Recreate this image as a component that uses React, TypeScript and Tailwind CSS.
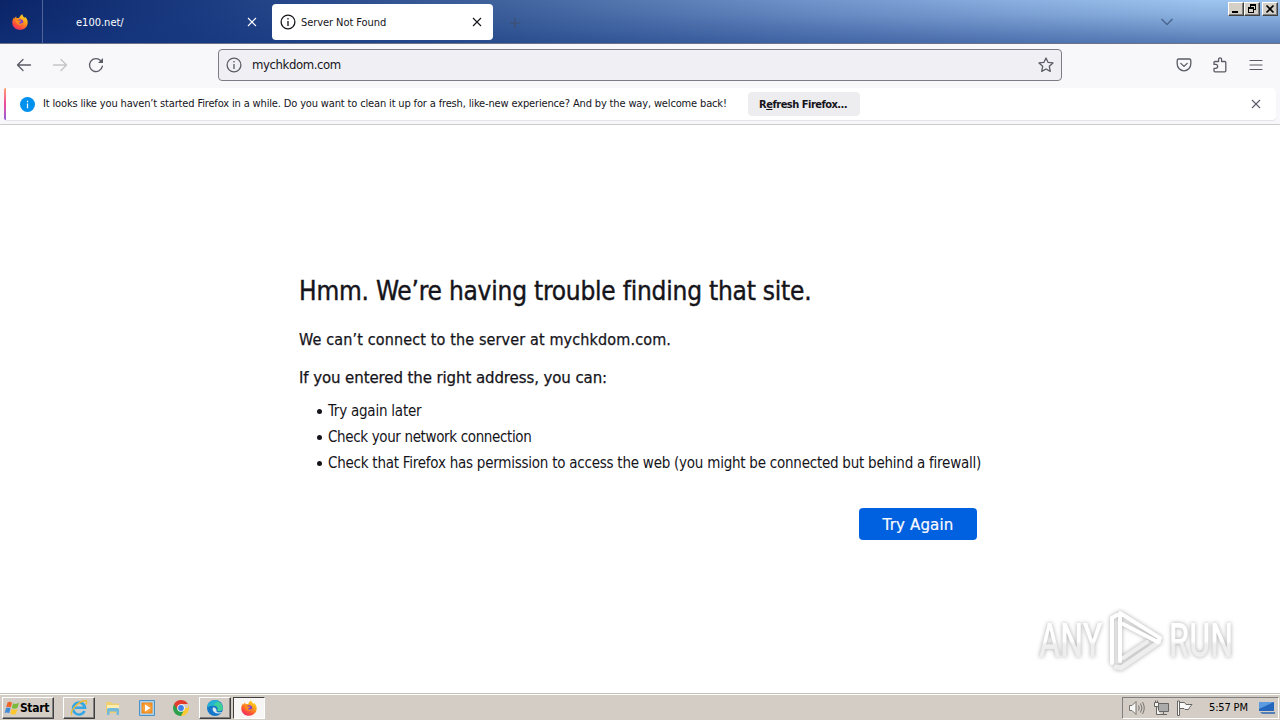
import type { ReactNode } from 'react';
import { clsx } from 'clsx';

interface IconProps {
  className?: string;
}

const SUGGESTIONS = [
  { text: 'Try again later', className: 'tracking-[-0.22px]' },
  { text: 'Check your network connection', className: 'tracking-[-0.36px]' },
  {
    text: 'Check that Firefox has permission to access the web (you might be connected but behind a firewall)',
    className: 'tracking-[-0.24px]',
  },
];

function FirefoxIcon({ className }: IconProps) {
  return (
    <svg viewBox="0 0 16 16" className={className} aria-hidden="true">
      <defs>
        <linearGradient id="fx-body" x1="0.8" y1="0" x2="0.2" y2="1">
          <stop offset="0" stopColor="#ffe226" />
          <stop offset="0.4" stopColor="#ff9a16" />
          <stop offset="0.75" stopColor="#ff4a3d" />
          <stop offset="1" stopColor="#e82a70" />
        </linearGradient>
      </defs>
      <path
        d="M10.3 0.2c.2 1.700 1.200 2.300 2.300 3.600.4-.2.500-.6.400-1 1.700 1.500 2.700 3.400 2.700 5.600 0 4.200-3.400 7.400-7.700 7.400S.3 12.500.3 8.400c0-2 .7-3.700 1.700-5 .1.500.2.900.4 1.200.5-.9 1.100-1.500 1.900-2-.1.700 0 1.200.3 1.600 1-.2 1.800-.1 2.500.1C7.500 2.400 8.700 1 10.300.2z"
        fill="url(#fx-body)"
      />
      <circle cx="8.200" cy="8.300" r="3" fill="#7c3fd4" />
      <path d="M4.200 6.200c1.200-.5 2.200-.2 3.200.4l1.800.1c-.3 1.200-1.500 1.300-1.900 1.700-.3.800.5 1.400 1.500 1.200 1.300-.2 1.700-.9 2.700-.7-.9 1.700-2.700 2.600-4.500 2.100C4.800 10.400 3.700 8.300 4.200 6.200z" fill="#ff8a1c" />
    </svg>
  );
}

function InfoIcon({ className }: IconProps) {
  return (
    <svg viewBox="0 0 16 16" className={className} fill="none" stroke="currentColor" aria-hidden="true">
      <circle cx="8" cy="8" r="6.900" strokeWidth="1.300" />
      <path d="M8 7v5M8 4v1.500" strokeWidth="1.300" />
    </svg>
  );
}

function CloseIcon({ className }: IconProps) {
  return (
    <svg viewBox="0 0 10 10" className={className} fill="none" stroke="currentColor" strokeWidth="1.100" aria-hidden="true">
      <path d="M1 1l8 8M9 1l-8 8" />
    </svg>
  );
}

function BackIcon({ className }: IconProps) {
  return (
    <svg viewBox="0 0 16 16" className={className} fill="none" stroke="currentColor" strokeWidth="1.300" strokeLinecap="round" strokeLinejoin="round" aria-hidden="true">
      <path d="M14.500 8H1.500M7 2.500L1.500 8 7 13.500" />
    </svg>
  );
}

function ReloadIcon({ className }: IconProps) {
  return (
    <svg viewBox="0 0 16 16" className={className} fill="none" stroke="currentColor" strokeWidth="1.300" strokeLinecap="round" aria-hidden="true">
      <path d="M14.400 9.200A6.500 6.500 0 1 1 12.800 3.700" />
      <path d="M15 1v5h-5z" fill="currentColor" stroke="none" />
    </svg>
  );
}

function StarIcon({ className }: IconProps) {
  return (
    <svg viewBox="0 0 16 16" className={className} fill="none" stroke="currentColor" strokeWidth="1.300" strokeLinejoin="round" aria-hidden="true">
      <path d="M8 1l2 4.300 5 .6-3.700 3.400 1 5.100L8 12l-4.300 2.400 1-5.100L1 5.900l5-.6z" />
    </svg>
  );
}

function PocketIcon({ className }: IconProps) {
  return (
    <svg viewBox="0 0 16 16" className={className} fill="none" stroke="currentColor" strokeWidth="1.300" strokeLinecap="round" strokeLinejoin="round" aria-hidden="true">
      <path d="M2.700 2h10.600a1.500 1.500 0 0 1 1.500 1.500V7a6.800 6.800 0 0 1-13.600 0V3.500A1.500 1.500 0 0 1 2.700 2z" />
      <path d="M4.800 6.400L8 9.400l3.200-3" />
    </svg>
  );
}

function PuzzleIcon({ className }: IconProps) {
  return (
    <svg viewBox="0 0 16 16" className={className} fill="none" stroke="currentColor" strokeWidth="1.300" strokeLinejoin="round" aria-hidden="true">
      <path d="M2 7.400V5.500a1 1 0 0 1 1-1h3.600V2.300a1.500 1.500 0 0 1 3 0v2.200h3.200a1 1 0 0 1 1 1v8.300a1 1 0 0 1-1 1H3a1 1 0 0 1-1-1v-2.500h1.700a1.900 1.900 0 0 0 0-3.900z" />
    </svg>
  );
}

function MenuIcon({ className }: IconProps) {
  return (
    <svg viewBox="0 0 14 12" className={className} stroke="currentColor" strokeWidth="1.200" strokeLinecap="round" aria-hidden="true">
      <path d="M1 1.500h12M1 6h12M1 10.500h12" />
    </svg>
  );
}

function WindowButton({ label, className, children }: { label: string; className?: string; children: ReactNode }) {
  return (
    <button
      aria-label={label}
      className={clsx(
        'h-[14px] w-4 border border-t-white border-l-white border-r-[#404040] border-b-[#404040] bg-[#d4d0c8] shadow-[inset_-1px_-1px_0_#808080]',
        className
      )}
    >
      <svg viewBox="0 0 14 12" className="h-3 w-3.5" fill="none" stroke="#000" shapeRendering="crispEdges">
        {children}
      </svg>
    </button>
  );
}

function TabStrip() {
  return (
    <header className="flex h-[44px] shrink-0 border-b border-[#6c7387] bg-[linear-gradient(to_bottom,rgba(20,55,128,0)_0%,rgba(20,55,128,0.14)_35%,rgba(20,55,128,0.52)_100%),linear-gradient(to_right,#0b2468_0%,#1a3a80_15%,#42659f_40%,#7093ca_63%,#8bb0e0_80%,#9dc5ef_94%,#9dc5ef_100%)]">
      <div className="flex w-[43px] shrink-0 items-center border-r border-[#506497] pl-3">
        <FirefoxIcon className="h-4 w-4" />
      </div>
      <div className="flex w-[229px] shrink-0 items-center pt-px pr-[15px] pl-[33px] text-white">
        <span className="flex-1 pt-0.5 text-[11px]">e100.net/</span>
        <CloseIcon className="h-2.5 w-2.5" />
      </div>
      <div className="mt-1 flex h-9 w-[221px] shrink-0 items-center rounded bg-white pr-[11px] pl-2 text-[#15141a]">
        <InfoIcon className="mr-[5px] h-4 w-4" />
        <span className="flex-1 pt-0.5 text-[11px] tracking-[-0.07px]">Server Not Found</span>
        <CloseIcon className="h-2.5 w-2.5" />
      </div>
      <svg viewBox="0 0 10 10" className="mt-[18px] ml-[17px] h-2.5 w-2.5" stroke="#3f4f70" strokeWidth="1.200">
        <path d="M5 0v10M0 5h10" />
      </svg>
      <svg viewBox="0 0 12 8" className="mt-[18px] ml-auto h-2 w-3" fill="none" stroke="#4c6690" strokeWidth="1.500">
        <path d="M.5 1L6 6.500 11.500 1" />
      </svg>
      <div className="mt-0.5 mr-[2px] ml-[55px] flex">
        <WindowButton label="Minimize">
          <path d="M3 9h6" strokeWidth="2" />
        </WindowButton>
        <WindowButton label="Restore">
          <path d="M5 2h6M5.500 1v4M10.500 1v6M8 6.500h3M3 5h6M3.500 4v6M8.500 4v6M3 9.500h6" />
          <path d="M5 1.500h6M3 4.500h6" />
        </WindowButton>
        <WindowButton label="Close" className="ml-[2px]">
          <path d="M3.500 2.500l7 7M10.500 2.500l-7 7" strokeWidth="1.700" shapeRendering="auto" />
        </WindowButton>
      </div>
    </header>
  );
}

function NavBar() {
  return (
    <nav className="flex h-[44px] shrink-0 items-center bg-[#f8f8fb] pb-[3px] text-[#5b5b66]">
      <BackIcon className="ml-4 h-4 w-4" />
      <BackIcon className="ml-5 h-4 w-4 rotate-180 text-[#c4c4ca]" />
      <ReloadIcon className="ml-5 h-4 w-4" />
      <div className="ml-[114px] flex h-8 w-[844px] items-center rounded border border-[#7c7c86] bg-[#f0f0f4] px-[7px]">
        <InfoIcon className="h-4 w-4" />
        <span className="flex-1 pl-[10px] text-[13px] tracking-[-0.4px] text-[#15141a]">mychkdom.com</span>
        <StarIcon className="h-4 w-4" />
      </div>
      <PocketIcon className="ml-[114px] h-4 w-4" />
      <PuzzleIcon className="ml-5 h-4 w-4" />
      <MenuIcon className="ml-[21px] h-3 w-3.5" />
    </nav>
  );
}

function NotificationBar() {
  return (
    <div className="h-[37px] shrink-0 border-b border-[#cccccf] bg-[#f8f8fa] px-1">
      <div className="flex h-8 items-center rounded bg-white shadow-[0_1px_1px_#e4e4e8]">
        <div className="h-8 w-[2px] rounded-l bg-linear-to-b from-[#ff9a68] via-[#f0469c] to-[#9059d8]" />
        <svg viewBox="0 0 16 16" className="ml-[14px] h-[15px] w-[15px]">
          <circle cx="8" cy="8" r="8" fill="#0090ed" />
          <path d="M8 7v5M8 4v1.500" stroke="#fff" strokeWidth="1.300" />
        </svg>
        <span className="ml-2 w-[705px] text-[11px] tracking-[-0.15px] whitespace-nowrap text-[#15141a]">
          It looks like you haven’t started Firefox in a while. Do you want to clean it up for a fresh, like-new experience? And by the way, welcome back!
        </span>
        <button className="h-6 w-28 shrink-0 rounded bg-[#ededf0] pt-0.5 pr-[2px] text-[11px] font-bold tracking-[-0.5px] whitespace-nowrap text-[#15141a]">
          R<span className="underline">e</span>fresh Firefox…
        </button>
        <CloseIcon className="mr-[15px] ml-auto h-2.5 w-2.5 text-[#5b5b66]" />
      </div>
    </div>
  );
}

function WatermarkWord({ children }: { children: ReactNode }) {
  return (
    <span className="w-[63px]">
      <span className="inline-block origin-left scale-x-[0.67] bg-linear-to-b from-white from-50% to-[#eeeeee] to-55% bg-clip-text text-transparent">
        {children}
      </span>
    </span>
  );
}

function AnyRunWatermark() {
  return (
    <div className="absolute right-[46px] bottom-[20px] flex h-[64px] w-[195px] items-center font-['Roboto',sans-serif] text-[48px] font-medium [filter:drop-shadow(0_0_2px_#aaa)]">
      <WatermarkWord>ANY</WatermarkWord>
      <svg viewBox="0 0 56 64" className="ml-[7px] h-16 w-14 shrink-0" fill="none" strokeLinejoin="round" strokeLinecap="round">
        <path d="M7 58l5 1 38-26" stroke="#eeeeee" strokeWidth="5" />
        <path d="M14 49l24-16" stroke="#eeeeee" strokeWidth="4" />
        <path d="M3 54V9l5-3" stroke="#fff" strokeWidth="4" />
        <path d="M11 52V4l40 25-2 4L14 15" stroke="#fff" strokeWidth="4" />
      </svg>
      <span className="ml-[4px]">
        <WatermarkWord>RUN</WatermarkWord>
      </span>
    </div>
  );
}

function ErrorPage() {
  return (
    <main className="relative flex-1 bg-white pl-[299px] text-[#15141a]">
      <h1 className="pt-[148px] text-[26px] leading-9 tracking-[-0.22px] whitespace-nowrap [-webkit-text-stroke:0.4px_#15141a]">
        Hmm. We’re having trouble finding that site.
      </h1>
      <p className="mt-[19px] text-[16px] leading-6 tracking-[0.14px] [-webkit-text-stroke:0.25px_#15141a]">
        We can’t connect to the server at mychkdom.com.
      </p>
      <p className="mt-[14px] font-['DejaVu_Sans',sans-serif] text-[15px] leading-6 tracking-[-0.1px] [-webkit-text-stroke:0.25px_#15141a]">
        If you entered the right address, you can:
      </p>
      <ul className="mt-2 text-[15px] leading-[26px]">
        {SUGGESTIONS.map((item) => (
          <li key={item.text} className="flex items-center pl-[18px] whitespace-nowrap">
            <span className="mr-[6px] h-[5px] w-[5px] rounded-full bg-[#15141a]" aria-hidden="true" />
            <span className={item.className}>{item.text}</span>
          </li>
        ))}
      </ul>
      <button className="mt-8 ml-[560px] h-8 w-[118px] rounded bg-[#0061e0] pt-0.5 font-['DejaVu_Sans',sans-serif] text-[15px] tracking-[0.15px] text-[#fbfbfe] [-webkit-text-stroke:0.2px_#fbfbfe]">
        Try Again
      </button>
      <AnyRunWatermark />
    </main>
  );
}

function TaskButton({ pressed, className, children }: { pressed?: boolean; className?: string; children: ReactNode }) {
  return (
    <button
      className={clsx(
        'flex h-[22px] w-8 items-center justify-center border',
        pressed
          ? 'border-t-[#404040] border-r-white border-b-white border-l-[#404040] bg-[#f7f6f4]'
          : 'border-t-white border-r-[#404040] border-b-[#404040] border-l-white bg-[#d4cdc6] shadow-[inset_-1px_-1px_0_#808080]',
        className
      )}
    >
      {children}
    </button>
  );
}

function Taskbar() {
  return (
    <footer className="flex h-[27px] shrink-0 items-center border-t border-[#c4c1ba] bg-[#d4cdc6] pt-px shadow-[inset_0_1px_0_#fff] text-black">
      <TaskButton className="ml-[2px] w-[52px] pr-[3px]">
        <svg viewBox="0 0 16 16" className="h-4 w-4 shrink-0">
          <path d="M3.500 2.500Q6 1 8 2.700L6.800 7.500Q4.500 6 2.200 7.200z" fill="#f0652a" />
          <path d="M9 3.200q2.500 1.600 6-.4l-1.400 5Q10.500 9.500 7.800 8z" fill="#7cba3b" />
          <path d="M2 8.200q2.300-1.300 4.500.2l-1.300 4.800Q3 12 .7 13z" fill="#3e8bd8" />
          <path d="M7.500 9q3 1.500 5.900 0L12 13.700q-3 1.700-5.700.1z" fill="#fcc62d" />
        </svg>
        <span className="text-[12px] font-bold tracking-[-0.3px]">Start</span>
      </TaskButton>
      <TaskButton className="ml-[9px]">
        <svg viewBox="0 0 18 18" className="h-[18px] w-[18px]" fill="none">
          <path d="M14.500 12A6 6 0 1 1 15 8.800H5" stroke="#35a7e4" strokeWidth="2.600" />
          <path d="M2 16C-1 13 8 2.500 15 1.500c2.500 0 2 2.500.8 4" stroke="#edbb35" strokeWidth="1.300" />
        </svg>
      </TaskButton>
      <svg viewBox="0 0 16 16" className="ml-[10px] h-4 w-4">
        <path d="M1 2h5l1 1.500h7V13H1z" fill="#edcf70" />
        <path d="M2 5h12v4H2z" fill="#fbeeb0" />
        <path d="M2 9.500q0-1.500 1.500-1.500h9Q14 8 14 9.500V15h-2.500v-3.500h-7V15H2z" fill="#72b9dc" />
      </svg>
      <svg viewBox="0 0 16 16" className="ml-[18px] h-4 w-4">
        <path d="M.5.500h15v15H.5z" fill="#a9d2ef" stroke="#4a91c8" />
        <path d="M2.500 2.500h11v11h-11z" fill="#f48b1d" />
        <circle cx="8" cy="8" r="4.700" fill="#f6a13b" />
        <path d="M6 4.500l5.500 3.500L6 11.500z" fill="#fff" />
      </svg>
      <svg viewBox="0 0 16 16" className="ml-[18px] h-4 w-4">
        <path d="M8 8h7l-.1-4A8 8 0 0 1 8 16z" fill="#fcc934" />
        <path d="M1.100 4L8 8l3 2-3 6A8 8 0 0 1 1.100 4z" fill="#2da04e" />
        <path d="M1.100 4A8 8 0 0 1 14.900 4H8L4.500 9.500z" fill="#e33b2e" />
        <circle cx="8" cy="8" r="3.800" fill="#fff" />
        <circle cx="8" cy="8" r="2.900" fill="#3f7fea" />
      </svg>
      <TaskButton className="ml-[10px]">
        <svg viewBox="0 0 16 16" className="h-4 w-4">
          <circle cx="8" cy="8" r="8" fill="#1677c8" />
          <path d="M.2 7A8 8 0 0 1 16 8c0 3-4 4-6 2.500 1.500-1 .8-5-3.500-5C3 5.500.5 7 .2 7z" fill="#3fcf9b" />
          <path d="M.2 7A8 8 0 0 1 13 1.800C8 1 7 5.500 6.500 5.500 3 5.500.5 7 .2 7z" fill="#24b3d5" />
          <path d="M6 7.500C4.500 11 8 14.500 13.500 13.200c.6-.3 1-.8 1.300-1.200-4 1.300-6-.2-5.300-2.300C8.700 9 9 7 6 7.500z" fill="#d4e8f2" />
        </svg>
      </TaskButton>
      <TaskButton pressed className="ml-[2px]">
        <FirefoxIcon className="h-4 w-4" />
      </TaskButton>
      <div className="mr-px ml-auto flex h-[22px] w-[157px] items-center border border-t-[#808080] border-r-white border-b-white border-l-[#808080] pl-[6px]">
        <svg viewBox="0 0 16 16" className="h-4 w-4" fill="none" stroke="#75736f">
          <path d="M.5 5.500H3l4-4v13l-4-4H.5z" fill="#f7f7f5" />
          <path d="M9.500 5.500q1.500 2.500 0 5M11.500 3.500q3 4.500 0 9M13.500 2q3.500 6 0 12" />
        </svg>
        <svg viewBox="0 0 16 16" className="ml-2 h-4 w-4" fill="none" stroke="#686663">
          <path d="M5.500 3.500h10v8h-10z" fill="#aaa" />
          <path d="M7 14.500h7M10.500 12v2" />
          <path d="M1.500 2.500h4v4h-4zM2.500.5v2M4.500.5v2M3.500 7v7.500h4" fill="#f3f3f0" />
        </svg>
        <svg viewBox="0 0 16 16" className="ml-2 h-4 w-4" fill="#fafafa" stroke="#686663">
          <path d="M.5 1v14.500h2V1zM2.500 2.500h5l1.500 2h6l-2.500 3-1 2H8l-1-1H2.500z" />
        </svg>
        <span className="ml-4 w-[50px] pt-0.5 text-[11px] tracking-[-0.15px] whitespace-nowrap">5:57 PM</span>
        <svg viewBox="0 0 16 14" className="h-3.5 w-4">
          <path d="M0 1h15v9H0z" fill="#2465bd" />
          <path d="M0 1h15L0 8z" fill="#5c9be0" />
          <path d="M1 11h15v2H3z" fill="#5380b4" />
        </svg>
      </div>
    </footer>
  );
}

export default function App() {
  return (
    <div className="flex h-[720px] w-[1280px] flex-col overflow-hidden bg-white font-['DejaVu_Sans_Condensed','DejaVu_Sans',sans-serif]">
      <TabStrip />
      <NavBar />
      <NotificationBar />
      <ErrorPage />
      <Taskbar />
    </div>
  );
}
